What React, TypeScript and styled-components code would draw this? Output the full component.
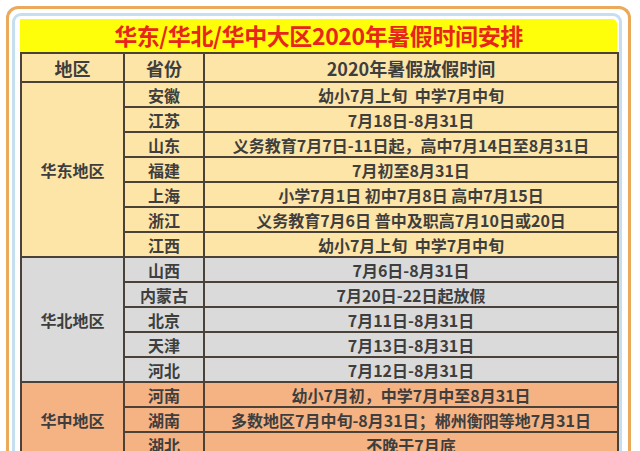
import React from "react";
import styled, { createGlobalStyle } from "styled-components";

const GlobalStyle = createGlobalStyle`
  body {
    margin: 0;
    background: #ffffff;
    font-family: "Noto Sans CJK SC", "Noto Sans", sans-serif;
  }
`;

const Page = styled.div`
  padding: 6px 0 0 6px;
  width: 640px;
  height: 451px;
  overflow: hidden;
  box-sizing: border-box;
`;

const OuterFrame = styled.div`
  width: 625px;
  box-sizing: border-box;
  border: 3px solid #eba95b;
  border-bottom: none;
  border-radius: 12px 12px 0 0;
  padding: 4px 6px 0 3px;
`;

const InnerFrame = styled.div`
  border: 3px solid #c6dff0;
  border-bottom: none;
  border-radius: 9px 9px 0 0;
  padding: 3px 2px 0 5px;
`;

const Title = styled.div`
  background: #fefe0a;
  color: #e8251c;
  font-size: 23px;
  font-weight: 700;
  height: 33px;
  line-height: 33px;
  text-align: center;
  border-top-right-radius: 5px;
  letter-spacing: -0.4px;
`;

const Table = styled.table`
  width: 597px;
  table-layout: fixed;
  border-collapse: collapse;
  border-top: 2px solid #4a4238;
  border-right: 2px solid #6b6660;
  border-left: 2px solid #4a4238;
`;

const Cell = styled.td<{ $bg: string; $head?: boolean }>`
  background: ${(p) => p.$bg};
  border: 2px solid #4a4238;
  color: #3e3e3e;
  font-weight: 700;
  font-size: ${(p) => (p.$head ? "18px" : "16px")};
  height: ${(p) => (p.$head ? "27px" : "23px")};
  padding: 0;
  text-align: center;
  white-space: nowrap;
  line-height: 1;
`;

const PEACH = "#fde4a7";
const GRAY = "#dadada";
const ORANGE = "#f5b283";

interface Region {
  name: string;
  bg: string;
  rows: [string, string][];
}

const regions: Region[] = [
  {
    name: "华东地区",
    bg: PEACH,
    rows: [
      ["安徽", "幼小7月上旬\u00a0\u00a0中学7月中旬"],
      ["江苏", "7月18日-8月31日"],
      ["山东", "义务教育7月7日-11日起，高中7月14日至8月31日"],
      ["福建", "7月初至8月31日"],
      ["上海", "小学7月1日 初中7月8日 高中7月15日"],
      ["浙江", "义务教育7月6日 普中及职高7月10日或20日"],
      ["江西", "幼小7月上旬\u00a0\u00a0中学7月中旬"],
    ],
  },
  {
    name: "华北地区",
    bg: GRAY,
    rows: [
      ["山西", "7月6日-8月31日"],
      ["内蒙古", "7月20日-22日起放假"],
      ["北京", "7月11日-8月31日"],
      ["天津", "7月13日-8月31日"],
      ["河北", "7月12日-8月31日"],
    ],
  },
  {
    name: "华中地区",
    bg: ORANGE,
    rows: [
      ["河南", "幼小7月初，中学7月中至8月31日"],
      ["湖南", "多数地区7月中旬-8月31日；郴州衡阳等地7月31日"],
      ["湖北", "不晚于7月底"],
    ],
  },
];

export default function App() {
  return (
    <>
      <GlobalStyle />
      <Page>
        <OuterFrame>
          <InnerFrame>
            <Title>华东/华北/华中大区2020年暑假时间安排</Title>
            <Table>
              <colgroup>
                <col style={{ width: 103 }} />
                <col style={{ width: 80 }} />
                <col style={{ width: 414 }} />
              </colgroup>
              <tbody>
                <tr>
                  <Cell $bg={PEACH} $head>地区</Cell>
                  <Cell $bg={PEACH} $head>省份</Cell>
                  <Cell $bg={PEACH} $head>2020年暑假放假时间</Cell>
                </tr>
                {regions.map((region) =>
                  region.rows.map(([prov, time], i) => (
                    <tr key={prov}>
                      {i === 0 && (
                        <Cell $bg={region.bg} rowSpan={region.rows.length}>
                          {region.name}
                        </Cell>
                      )}
                      <Cell $bg={region.bg}>{prov}</Cell>
                      <Cell $bg={region.bg}>{time}</Cell>
                    </tr>
                  ))
                )}
              </tbody>
            </Table>
          </InnerFrame>
        </OuterFrame>
      </Page>
    </>
  );
}
